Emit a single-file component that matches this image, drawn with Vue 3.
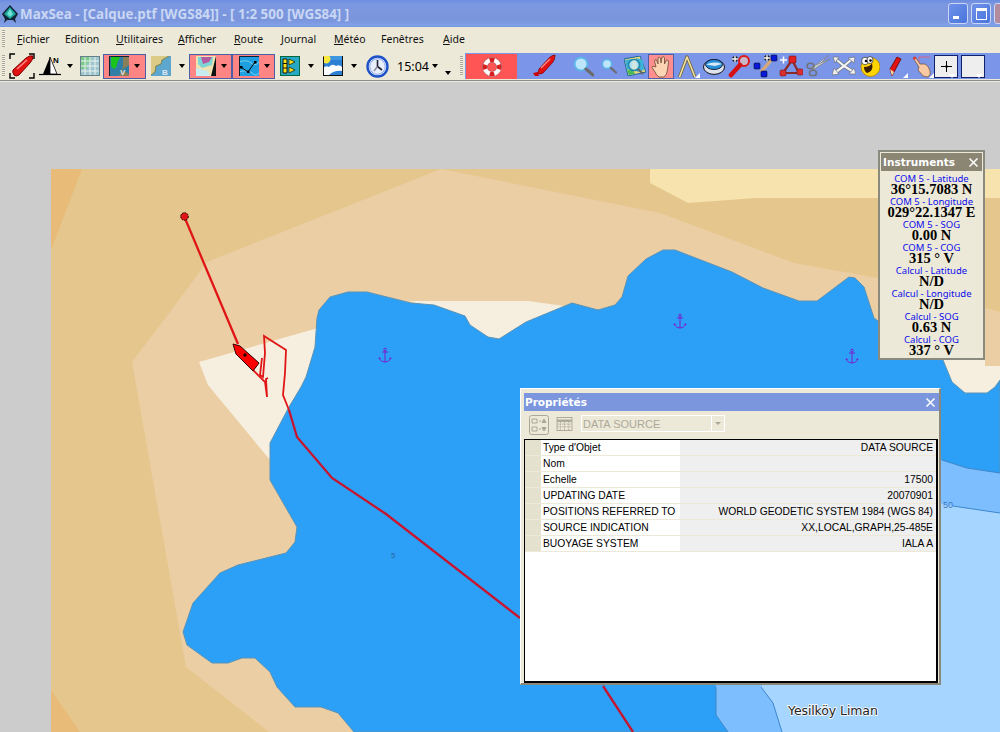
<script setup>
const menus = [
  { first: 'F', rest: 'ichier', u: true },
  { first: 'E', rest: 'dition', u: false },
  { first: 'U', rest: 'tilitaires', u: true },
  { first: 'A', rest: 'fficher', u: true },
  { first: 'R', rest: 'oute', u: true },
  { first: 'J', rest: 'ournal', u: true },
  { first: 'M', rest: 'étéo', u: true },
  { first: 'F', rest: 'enêtres', u: false },
  { first: 'A', rest: 'ide', u: true }
]
const instruments = [
  ['COM 5 - Latitude', '36°15.7083 N'],
  ['COM 5 - Longitude', '029°22.1347 E'],
  ['COM 5 - SOG', '0.00 N'],
  ['COM 5 - COG', '315 ° V'],
  ['Calcul - Latitude', 'N/D'],
  ['Calcul - Longitude', 'N/D'],
  ['Calcul - SOG', '0.63 N'],
  ['Calcul - COG', '337 ° V']
]
const props = [
  ["Type d'Objet", 'DATA SOURCE'],
  ['Nom', ''],
  ['Echelle', '17500'],
  ['UPDATING DATE', '20070901'],
  ['POSITIONS REFERRED TO', 'WORLD GEODETIC SYSTEM 1984 (WGS 84)'],
  ['SOURCE INDICATION', 'XX,LOCAL,GRAPH,25-485E'],
  ['BUOYAGE SYSTEM', 'IALA A']
]
const anchors = [[385, 355], [680, 321], [852, 356]]
const coast = '301,387 306,377 315,347 317,318 319,310 330,297 348,292 367,292 411,303 434,305 465,316 470,325 488,337 499,339 526,322 572,303 598,310 615,305 622,297 628,276 646,259 663,250 675,250 732,272 763,288 799,301 817,301 849,277 855,278 864,287 874,318 878,321 943,360 952,382 965,393 987,393 995,387 1000,380 1000,732 354,732 338,713 321,707 295,707 277,687 270,672 255,658 242,658 228,663 212,663 187,645 183,632 193,603 220,573 238,565 286,553 295,542 297,527 270,480 270,443 289,407'
</script>

<template>
  <div class="app">
    <header class="title">
      <svg class="logo" width="18" height="20" viewBox="0 0 18 20">
        <path d="M9 1 L17 10 L14 15 L15 19 L12 16 H6 L3 19 L4 15 L1 10Z" fill="#123" />
        <path d="M9 3 L15 10 L9 15 L3 10Z" fill="#1ea7a0" />
        <path d="M9 5 L12 10 L9 13 L6 10Z" fill="#6fe0d0" />
      </svg>
      <span class="title-text">MaxSea - [Calque.ptf [WGS84]] - [ 1:2 500 [WGS84] ]</span>
      <div class="win-btns">
        <span class="wb"><i class="wmin"></i></span>
        <span class="wb"><i class="wmax"></i></span>
        <span class="wb wclose"></span>
      </div>
    </header>

    <nav class="menu">
      <span class="grip"></span>
      <span v-for="m in menus" :key="m.rest" class="menu-item"><u v-if="m.u">{{ m.first }}</u><template v-else>{{ m.first }}</template>{{ m.rest }}</span>
    </nav>

    <div class="toolbar">
      <div class="tb-left">
        <span class="grip tgrip"></span>
        <span class="cell">
          <svg width="26" height="26" viewBox="0 0 26 26">
            <path d="M1 6V1H6M20 1H25V6M1 20V25H6M20 25H25V20" fill="none" stroke="#000" stroke-width="1.4" />
            <path d="M4 17 L17 5 Q21 2 24 3 Q24 7 21 10 L10 22 Q7 24 5 22 Q3 19 4 17Z" fill="#e31212" stroke="#7a0000" />
            <path d="M8 16 L18 7" stroke="#ff8a8a" stroke-width="1.5" />
          </svg>
        </span>
        <span class="cell">
          <svg width="24" height="20" viewBox="0 0 24 20">
            <path d="M1 18.5H23" stroke="#000" stroke-width="1.2" />
            <path d="M12 1 L5 18 H12Z" fill="#000" />
            <path d="M12 1 L19 18 H12Z" fill="#fff" stroke="#000" stroke-width=".8" />
            <text x="15" y="7" class="svgn">N</text>
          </svg>
        </span>
        <span class="drop"></span>
        <span class="cell">
          <svg width="20" height="20" viewBox="0 0 20 20">
            <rect width="20" height="20" fill="#9fc6cf" />
            <path d="M0 0H11V7H7V13H0Z" fill="#7cc98d" />
            <path d="M5 0V20M10 0V20M15 0V20M0 5H20M0 10H20M0 15H20" stroke="#e9f3ef" stroke-width="1" />
            <rect x=".5" y=".5" width="19" height="19" fill="none" stroke="#66808a" />
          </svg>
        </span>
        <span class="redbtn">
          <svg width="20" height="20" viewBox="0 0 20 20">
            <rect width="20" height="20" fill="#2e7ea6" />
            <path d="M14 0 H20 V9 L13 14 L20 18 V20 H10 L14 11Z" fill="#8a7f58" />
            <path d="M2 1 Q9 -1 11 1 Q8 6 7 12 Q3 14 2 9Z" fill="#19c41d" />
            <text x="11" y="18.5" class="svgv">V</text>
            <path d="M.5 20V.5H20" fill="none" stroke="#123" />
          </svg>
          <span class="drop"></span>
        </span>
        <span class="cell">
          <svg width="20" height="20" viewBox="0 0 20 20">
            <rect width="20" height="20" fill="#5da7cf" />
            <path d="M0 0H18 Q14 3 11 4 L10 8 L5 10 L4 16 L0 19Z" fill="#dccb86" />
            <path d="M0 19 L4 16 L5 10 L10 8 L11 4 L18 0" fill="none" stroke="#76824f" />
            <text x="11" y="18.5" class="svgv">B</text>
          </svg>
        </span>
        <span class="drop"></span>
        <span class="redbtn b2">
          <svg width="20" height="20" viewBox="0 0 20 20">
            <rect width="20" height="20" fill="#111" />
            <path d="M0 20V0H20L15 20Z" fill="#efe3b4" />
            <path d="M2 1H17L16 9 L6 12 L2 8Z" fill="#7fd5d5" />
            <path d="M5 1H16L13 6 L7 8Z" fill="#b45aa0" />
            <path d="M0 20 V12 L12 15 L14 20Z" fill="#c7ecf0" />
          </svg>
          <span class="drop"></span>
        </span>
        <span class="redbtn b3">
          <svg width="20" height="20" viewBox="0 0 20 20">
            <rect width="20" height="20" fill="#1f9fe0" />
            <path d="M0 6 Q8 3 12 7 T20 6M0 16 Q9 13 13 17 T20 17" stroke="#75d2f2" fill="none" />
            <path d="M2 11 L9 16 L16 6" stroke="#000" stroke-width="1" fill="none" />
            <rect x="1" y="10" width="2.500" height="2.500" fill="#000" /><rect x="8" y="14.500" width="2.500" height="2.500" fill="#000" /><rect x="15" y="5" width="2.500" height="2.500" fill="#000" />
            <path d="M.5 20V.5H20" fill="none" stroke="#123" />
          </svg>
          <span class="drop"></span>
        </span>
        <span class="cell">
          <svg width="20" height="20" viewBox="0 0 20 20">
            <rect x=".5" y=".5" width="19" height="19" fill="#27a9c4" stroke="#064" />
            <path d="M3 3H7V17H3Z" fill="#ffe21a" />
            <path d="M3 3H7V17H3ZM3 7.500H7M3 12H7" fill="none" stroke="#111" />
            <path d="M9 3L15 6 9 9ZM9 11L15 14 9 17Z" fill="#ffe21a" stroke="#111" stroke-width=".7" />
          </svg>
        </span>
        <span class="drop"></span>
        <span class="cell">
          <svg width="20" height="20" viewBox="0 0 20 20">
            <rect width="20" height="20" fill="#2d7fd3" />
            <path d="M0 4 H20 V0 H0Z" fill="#3d97e0" />
            <circle cx="3" cy="3" r="4.500" fill="#ffe83c" />
            <path d="M0 17 V12 Q3 9 6 11 Q9 7 13 10 Q17 8 20 12 V15 Q10 14 5 20 H0Z" fill="#fff" />
            <path d="M.5 20V.5" stroke="#111" /><path d="M19.500 0V20M0 19.500H20" stroke="#111" />
          </svg>
        </span>
        <span class="drop"></span>
        <span class="cell">
          <svg width="23" height="23" viewBox="0 0 23 23">
            <circle cx="11.500" cy="11.500" r="10" fill="#fff" stroke="#1e50c8" stroke-width="2.400" />
            <circle cx="11.500" cy="11.500" r="7.800" fill="#e8eefc" stroke="#7da0e8" stroke-width="1" />
            <path d="M11.500 5V11.500L16 15" fill="none" stroke="#223" stroke-width="1.600" />
            <path d="M11.500 11.500L8 16" stroke="#889" stroke-width="1.400" />
          </svg>
        </span>
        <span class="time">15:04</span>
        <span class="drop"></span>
        <span class="drop low"></span>
        <span class="grip tgrip2"></span>
        <span class="buoy">
          <svg width="20" height="20" viewBox="0 0 22 22">
            <circle cx="11" cy="11" r="10.400" fill="none" stroke="#8a6a6a" stroke-width=".8" />
            <circle cx="11" cy="11" r="5.200" fill="none" stroke="#8a6a6a" stroke-width=".8" />
            <circle cx="11" cy="11" r="7.800" fill="none" stroke="#fff" stroke-width="4.600" />
            <path d="M8.500 3.600A7.800 7.800 0 0 1 13.500 3.600M18.400 8.500A7.800 7.800 0 0 1 18.400 13.500M13.500 18.400A7.800 7.800 0 0 1 8.500 18.400M3.600 13.500A7.800 7.800 0 0 1 3.600 8.500" fill="none" stroke="#d81f1f" stroke-width="4.600" />
          </svg>
        </span>
      </div>
      <div class="tb-right">
        <span class="cell">
          <svg width="24" height="24" viewBox="0 0 24 24">
            <path d="M7 15 L17 4 Q20 1 23 1 Q23 5 21 8 L11 19 Q8 21 6 19Z" fill="#e31212" stroke="#8a0000" stroke-width=".8" />
            <path d="M9 14 L18 5" stroke="#ff9090" stroke-width="1.200" />
            <path d="M1 19 L6 18 L7 22 L3 22Z" fill="#c00" />
          </svg>
        </span>
        <span class="cell">
          <svg width="21" height="21" viewBox="0 0 21 21">
            <circle cx="8" cy="8" r="6.500" fill="#bde6fa" stroke="#5fb4ea" stroke-width="2" />
            <path d="M13 13 L20 19" stroke="#6b6b6b" stroke-width="3" stroke-linecap="round" />
          </svg>
        </span>
        <span class="cell">
          <svg width="16" height="16" viewBox="0 0 16 16">
            <circle cx="6" cy="6" r="4.600" fill="#bde6fa" stroke="#5fb4ea" stroke-width="1.600" />
            <path d="M10 10 L15 14.500" stroke="#6b6b6b" stroke-width="2.200" stroke-linecap="round" />
          </svg>
        </span>
        <span class="cell">
          <svg width="22" height="20" viewBox="0 0 22 20">
            <path d="M0 3L16 0L22 16L4 20Z" fill="#e9d87c" stroke="#1a6a9a" />
            <path d="M1 4L9 3L8 12L3 14ZM12 2L19 4L20 14L13 16Z" fill="#3db0d8" />
            <path d="M3 15L8 12L11 18L5 19Z" fill="#4bb858" />
            <circle cx="10" cy="9" r="5.500" fill="#cdebf8" fill-opacity=".8" stroke="#28a" stroke-width="1.600" />
            <path d="M14 13L19 18" stroke="#666" stroke-width="2.200" />
          </svg>
        </span>
        <span class="hand-btn">
          <svg width="20" height="23" viewBox="0 0 20 23">
            <path d="M5 12 L3.500 6 Q3.500 4 5.500 5 L7 9 L7 3 Q8 1 9.500 3 L10 8 L11 2 Q13 1 13.500 3 L13.500 9 L15.500 5 Q17.500 4.500 17.500 7 L16.500 15 Q16 20 13 22 L8 22 Q5 20 4 17 L1 12.500 Q1 10.500 3 11.500Z" fill="#fbd4b4" stroke="#7a5540" stroke-width=".9" />
          </svg>
        </span>
        <span class="cell tri-mark">
          <svg width="18" height="23" viewBox="0 0 18 23">
            <path d="M1.500 22 L9 2 L17 22" fill="none" stroke="#6d6238" stroke-width="3.200" stroke-linejoin="round" />
            <path d="M1.500 22 L9 2 L17 22" fill="none" stroke="#f2e2a0" stroke-width="1.600" stroke-linejoin="round" />
          </svg>
        </span>
        <span class="cell">
          <svg width="22" height="18" viewBox="0 0 22 18">
            <ellipse cx="11" cy="10" rx="10.500" ry="7.400" fill="#dfe4ec" stroke="#111" stroke-width="1" />
            <ellipse cx="11" cy="7.500" rx="8.500" ry="5" fill="#2a90d8" stroke="#124" />
            <path d="M3 7.500 Q11 4 19 7L12 9Z" fill="#d8eaf8" />
          </svg>
        </span>
        <span class="cell">
          <svg width="24" height="25" viewBox="0 0 24 25">
            <circle cx="16" cy="7" r="5" fill="#c8b8c8" stroke="#e01818" stroke-width="2" />
            <path d="M12 11 L3 21" stroke="#d41010" stroke-width="4.600" stroke-linecap="round" />
            <path d="M4 5H10M7 2V8" stroke="#000" stroke-width="3" /><path d="M4 5H10M7 2V8" stroke="#fff" stroke-width="1.400" />
          </svg>
        </span>
        <span class="cell">
          <svg width="25" height="24" viewBox="0 0 25 24">
            <path d="M8 18 L20 4" stroke="#d6a878" stroke-width="3.400" />
            <rect x="1" y="9" width="6" height="6" rx="1" fill="#0a18d8" stroke="#013" stroke-width=".6" />
            <rect x="8" y="17" width="6" height="6" rx="1" fill="#0a18d8" stroke="#013" stroke-width=".6" />
            <rect x="18" y="1" width="6" height="6" rx="1" fill="#0a18d8" stroke="#013" stroke-width=".6" />
            <path d="M11 4H17M14 1V7" stroke="#000" stroke-width="3" /><path d="M11 4H17M14 1V7" stroke="#fff" stroke-width="1.400" />
          </svg>
        </span>
        <span class="cell">
          <svg width="24" height="24" viewBox="0 0 24 24">
            <path d="M13 6 L4 19 H20Z" fill="none" stroke="#8a2a2a" stroke-width="2.200" />
            <rect x="10" y="2" width="7" height="7" rx="1" fill="#e02020" stroke="#7a1010" stroke-width=".6" />
            <rect x="1" y="16" width="6" height="6" rx="1.500" fill="#d83030" stroke="#7a1010" stroke-width=".6" />
            <rect x="18" y="15" width="6" height="6" rx="1.500" fill="#d83030" stroke="#7a1010" stroke-width=".6" />
            <path d="M1 6H8M4.500 2.500V9.500" stroke="#fff" stroke-width="1.500" />
          </svg>
        </span>
        <span class="cell">
          <svg width="24" height="22" viewBox="0 0 24 22">
            <path d="M23 0 L6 13 L8 15Z" fill="#eef0f4" stroke="#7c828c" stroke-width=".8" />
            <path d="M24 4 L7 15 L5 12Z" fill="#c9ced6" stroke="#7c828c" stroke-width=".8" />
            <ellipse cx="4.500" cy="11" rx="3.500" ry="2.800" fill="none" stroke="#6f747c" stroke-width="1.600" />
            <ellipse cx="7" cy="18" rx="3.500" ry="2.800" fill="none" stroke="#6f747c" stroke-width="1.600" />
          </svg>
        </span>
        <span class="cell">
          <svg width="24" height="20" viewBox="0 0 24 20">
            <path d="M12 10 L5 4M12 10 L19 4M12 10 L4 16M12 10 L20 15" stroke="#6c7078" stroke-width="3.600" />
            <path d="M12 10 L5 4M12 10 L19 4M12 10 L4 16M12 10 L20 15" stroke="#f4f4f4" stroke-width="2.200" />
            <path d="M1 1H7L3 7ZM23 1L22 7 16 2ZM0 19 L2 12 7 18ZM24 18 L17 18 22 12Z" fill="#eeeeee" stroke="#6c7078" stroke-width=".7" />
          </svg>
        </span>
        <span class="cell">
          <svg width="20" height="21" viewBox="0 0 20 21">
            <circle cx="10.500" cy="11" r="9.500" fill="#ffd400" stroke="#a87800" stroke-width=".7" />
            <path d="M4 11 Q10 11 12 7 Q14 15 7 17 Q4 15 4 11Z" fill="#3a2000" />
            <ellipse cx="5" cy="5" rx="3.400" ry="3.800" fill="#fff" stroke="#222" stroke-width=".7" />
            <ellipse cx="10" cy="4" rx="3" ry="3.500" fill="#fff" stroke="#222" stroke-width=".7" />
            <circle cx="6" cy="5" r="1.300" fill="#000" /><circle cx="10.500" cy="4.500" r="1.300" fill="#000" />
          </svg>
        </span>
        <span class="cell tri-mark">
          <svg width="13" height="21" viewBox="0 0 13 21">
            <path d="M3 20 L1 13 L8 1 L12 3 L5 16Z" fill="#e31212" stroke="#650000" stroke-width=".8" />
            <path d="M1 13 L3 20 L5 16Z" fill="#f3d7a8" />
          </svg>
        </span>
        <span class="cell tri-mark">
          <svg width="21" height="23" viewBox="0 0 21 23">
            <path d="M8 2H19M8 2V12" stroke="#f05a70" stroke-width=".8" />
            <path d="M2 3 Q4 1 5 3 L9 9 L14 9 Q18 11 19 16 Q20 21 16 22 L12 21 L7 15 L8 12Z" fill="#f9c9a4" stroke="#754" stroke-width=".8" />
            <path d="M2 3 L4 1.500 L5.500 3.500 L3 5Z" fill="#e33" />
          </svg>
        </span>
        <span class="box tri-mark dark"><svg width="11" height="11" viewBox="0 0 11 11"><path d="M5.500 0V11M0 5.500H11" stroke="#000" /><circle cx="5.500" cy="5.500" r="1.300" /></svg></span>
        <span class="box tri-mark dark"></span>
      </div>
    </div>
    <div class="shade"></div>

    <main class="stage">
      <svg class="map" width="949" height="563" viewBox="51 169 949 563">
        <rect x="51" y="169" width="949" height="563" fill="#e5c68c" />
        <path d="M51 169H82L51 250Z" fill="#e8bc78" />
        <path d="M51 690L80 732H51Z" fill="#e8bc78" />
        <path d="M441 169L300 225L207 262L170 312L132 362L186 667L269 732H360V400H1000V312L878 278L794 263L660 213Z" fill="#eccea4" />
        <path d="M650 169H1000V198H756L688 203L650 183Z" fill="#f7e3ae" />
        <path d="M199 362L318 328L315 347L306 377L301 387L289 407L270 443V460L208 385Z" fill="#f6efe0" />
        <path d="M409 301H528L564 306L572 310L526 330L499 345L470 330L434 308Z" fill="#f6efe0" />
        <path d="M940 360H1000V385L987 398H960L945 380Z" fill="#f6efe0" />
        <path d="M985 360H1000V366H985Z" fill="#eccea4" />
        <polygon :points="coast" fill="#2ca0f6" stroke="#5b93b6" stroke-width="1" />
        <path d="M1000 473L967 468L942 460L716 600V715L728 732H1000Z" fill="#7dbeff" />
        <path d="M1000 513L953 506L900 495L761 687L773 703L782 732H1000Z" fill="#a6d5ff" />
        <path d="M1000 473L967 468L942 460M716 687V715L728 732M1000 513L953 506M761 687L773 703L782 732" fill="none" stroke="#3f86c8" stroke-width="1" />
        <text x="943" y="508" class="sound fifty">50</text>
        <text x="391" y="558" class="sound">5</text>
        <text x="788" y="715" class="place">Yesilköy Liman</text>
        <g v-for="a in anchors" :key="a[0]" :transform="`translate(${a[0]} ${a[1]})`" fill="none" stroke="#7a1fd0" stroke-width="1">
          <circle cy="-5.500" r="1.300" />
          <path d="M0 -4V7M-3 -3H3M-5.500 3Q-5 6.500 0 7Q5 6.500 5.500 3M-6 4L-5.500 2.500L-4.500 4M6 4L5.500 2.500L4.500 4" />
        </g>
        <polyline points="184,216 238,344" fill="none" stroke="#e01616" stroke-width="2.300" />
        <polyline points="253,370 265,382 267,397 266,379 268,378" fill="none" stroke="#e01616" stroke-width="1.800" />
        <polyline points="262,358 260,375 263,377 265,353 264,336 286,350 285,373 283,395 289,410" fill="none" stroke="#e01616" stroke-width="1.800" />
        <polyline points="289,410 297,437 332,478 386,514 520,618" fill="none" stroke="#c8152f" stroke-width="2.300" />
        <polyline points="603,686 633,732" fill="none" stroke="#c8152f" stroke-width="2.300" />
        <path d="M233 344L240 346L259 363L253 371L236 354Z" fill="#f00" stroke="#300" stroke-width="1" />
        <circle cx="245" cy="355" r="1.700" fill="#200" />
        <circle cx="184.500" cy="216.500" r="3.800" fill="#e01616" stroke="#000" stroke-dasharray="1.500 1" />
      </svg>

      <section class="instr">
        <div class="instr-head"><span>Instruments</span><svg width="9" height="9" viewBox="0 0 9 9"><path d="M.5 .5L8.500 8.500M8.500 .5L.5 8.500" stroke="#fff" stroke-width="1.500" /></svg></div>
        <div class="instr-body">
          <div v-for="r in instruments" :key="r[0]" class="instr-row">
            <span class="ilabel">{{ r[0] }}</span>
            <span class="ivalue">{{ r[1] }}</span>
          </div>
        </div>
      </section>

      <section class="prop">
        <div class="prop-head"><span>Propriétés</span><svg width="9" height="9" viewBox="0 0 9 9"><path d="M.5 .5L8.500 8.500M8.500 .5L.5 8.500" stroke="#fff" stroke-width="1.500" /></svg></div>
        <div class="prop-tools">
          <svg width="20" height="20" viewBox="0 0 20 20">
            <rect x=".5" y=".5" width="19" height="19" rx="2" fill="none" stroke="#aca899" />
            <path d="M3 4H8V8H3ZM3 12H8V16H3Z" fill="none" stroke="#aca899" /><path d="M10 6H12M10 14H12M13 7.500L15 4L17 7.500ZM13 12.500L15 16L17 12.500Z" fill="#aca899" stroke="#aca899" />
          </svg>
          <svg class="tool2" width="17" height="14" viewBox="0 0 17 15">
            <rect x=".5" y=".5" width="16" height="14" fill="none" stroke="#aca899" />
            <path d="M.5 4H16.500" stroke="#aca899" stroke-width="2.500" /><path d="M1 7.500H16M1 10.500H16M4 5V15M8.500 5V15M13 5V15" stroke="#aca899" stroke-dasharray="1.500 1" />
          </svg>
          <div class="combo"><span class="combo-text">DATA SOURCE</span><span class="combo-btn"></span></div>
        </div>
        <div class="prop-list">
          <div v-for="p in props" :key="p[0]" class="prow">
            <span class="pgut"></span>
            <span class="pname">{{ p[0] }}</span>
            <span class="pval">{{ p[1] }}</span>
          </div>
        </div>
      </section>
    </main>
  </div>
</template>

<style scoped>
.app {
  position: relative;
  width: 1000px;
  height: 732px;
  overflow: hidden;
  background: #cccccc;
  display: flex;
  flex-direction: column;
  font-family: "Noto Sans", "Liberation Sans", sans-serif;
  color: #000;
}
.title {
  height: 27px;
  flex: none;
  display: flex;
  align-items: center;
  padding-left: 1px;
  background: linear-gradient(#6c8ce0 0, #7c98e0 4px, #7a95dc 20px, #80a2ea 26px, #6f8fd8 27px);
}
.logo { flex: none; margin-top: 1px; }
.title-text {
  margin-left: 1px;
  color: #c9d7f4;
  font: bold 13.400px "Open Sans", "DejaVu Sans", sans-serif;
  white-space: nowrap;
}
.win-btns { margin-left: auto; display: flex; gap: 3px; margin-right: -14px; margin-top: -1px; }
.wb {
  width: 18px;
  height: 19px;
  border: 1px solid #c9d6f6;
  border-radius: 3px;
  background: linear-gradient(135deg, #6f92ea, #4a74dc);
  position: relative;
  display: block;
}
.wclose { background: #b38b9e; }
.wmin { position: absolute; left: 4px; bottom: 4px; width: 6px; height: 3px; background: #fff; }
.wmax { position: absolute; left: 4px; top: 4px; width: 9px; height: 8px; border: 1px solid #fff; border-top-width: 3px; }

.menu {
  height: 26px;
  flex: none;
  box-sizing: border-box;
  padding-bottom: 3px;
  display: grid;
  grid-template-columns: 10px 48px 51px 62px 56px 47px 53px 47px 62px 60px;
  align-items: center;
  background: #ece9d8;
  font-size: 10.500px;
}
.menu-item { padding-left: 7px; white-space: nowrap; color: #111; }
.grip {
  display: block;
  width: 3px;
  height: 17px;
  margin-left: 2px;
  background: repeating-linear-gradient(#a8a594 0 1px, #f4f2e8 1px 2px);
}
.toolbar {
  height: 26px;
  flex: none;
  display: flex;
  background: #ece9d8;
}
.tb-left {
  width: 517px;
  flex: none;
  display: grid;
  grid-template-columns: 7px 30px 26px 13px 27px 43px 29px 13px 44px 43px 29px 14px 29px 13px 34px 36px 10px 15px 10px 52px;
  align-items: center;
}
.tb-right {
  flex: 1;
  display: grid;
  grid-template-columns: 53px 27px 24px 27px 26px 26px 27px 26px 25px 26px 27px 26px 26px 25px 26px 27px 26px;
  align-items: center;
  background: #7b96e8;
}
.cell { display: flex; align-items: center; justify-content: center; height: 26px; position: relative; }
.cell svg, .redbtn svg, .buoy svg, .hand-btn svg { display: block; }
.tgrip { margin-left: 2px; height: 22px; }
.tgrip2 { margin-left: 5px; height: 20px; }
.drop { position: relative; display: flex; justify-content: center; height: 26px; align-items: center; }
.drop::after {
  content: "";
  border-left: 3.500px solid transparent;
  border-right: 3.500px solid transparent;
  border-top: 4px solid #000;
}
.drop.low::after { margin-top: 13px; }
.redbtn {
  height: 25px;
  box-sizing: border-box;
  background: #ff8585;
  border: 1px solid #4a5fa8;
  display: flex;
  align-items: center;
  padding-left: 5px;
}
.redbtn .drop { width: 14px; margin-left: 1px; }
.redbtn.b2 { margin-left: 1px; padding-left: 6px; }
.redbtn.b3 { padding-left: 6px; }
.time { font-size: 12.500px; padding-left: 3px; }
.buoy {
  height: 26px;
  background: #ff5555;
  display: flex;
  align-items: center;
  justify-content: center;
  box-sizing: border-box;
  border-left: 1px solid #7b96e8;
  border-top: 1px solid #7b96e8;
}
.hand-btn {
  height: 25px;
  box-sizing: border-box;
  background: #ff8f8f;
  border: 1px solid #4a5fa8;
  display: flex;
  align-items: center;
  justify-content: center;
}
.tri-mark { position: relative; }
.tri-mark::after {
  content: "";
  position: absolute;
  right: 0;
  bottom: 1px;
  border-left: 5px solid transparent;
  border-bottom: 5px solid #fff;
}
.box {
  width: 24px;
  height: 23px;
  box-sizing: border-box;
  background: #eeeeee;
  border: 1px solid #10206a;
  display: flex;
  align-items: center;
  justify-content: center;
}
.box.dark::after {
  right: 1px;
  bottom: -1px;
  border-left: 4px solid transparent;
  border-right: 4px solid transparent;
  border-top: 4px solid #fff;
  border-bottom: 0;
}
.shade {
  height: 3px;
  flex: none;
  background: linear-gradient(#ece9d8 0 1px, #8c8c84 1px 2px, #e8e8e8 2px);
}
.stage {
  flex: 1;
  padding: 87px 0 0 51px;
  min-height: 0;
}
.map { display: block; }
.sound { font: 8px "Liberation Sans", sans-serif; fill: #2b62a0; }
.fifty { font-size: 9px; fill: #3a78c0; }
.place {
  font: 12.500px "DejaVu Sans", sans-serif;
  letter-spacing: -.1px;
  fill: #222;
  paint-order: stroke;
  stroke: #fff;
  stroke-width: 1.500px;
}
.svgn { font: bold 8px "Liberation Sans", sans-serif; fill: #000; }
.svgv { font: bold 8px "Liberation Sans", sans-serif; fill: #dfe9f5; }

.instr {
  position: absolute;
  left: 878px;
  top: 150px;
  width: 107px;
  height: 210px;
  box-sizing: border-box;
  background: #ece9d8;
  border: 2px solid #8b8a7e;
}
.instr-head {
  margin: 1px;
  height: 18px;
  background: #8b8673;
  color: #fff;
  font: bold 10.500px "DejaVu Sans", sans-serif;
  display: flex;
  align-items: center;
  justify-content: space-between;
  padding: 0 4px 0 2px;
}
.instr-body { display: flex; flex-direction: column; align-items: center; margin-top: 3px; }
.instr-row { height: 23px; display: flex; flex-direction: column; align-items: center; }
.ilabel { display: block; font-size: 9.500px; line-height: 9px; color: #0c0cec; white-space: nowrap; }
.ivalue { display: block; font: bold 14.500px/12px "Liberation Serif", serif; color: #000; white-space: nowrap; }

.prop {
  position: absolute;
  left: 520px;
  top: 388px;
  width: 421px;
  height: 297px;
  box-sizing: border-box;
  background: #ece9d8;
  border: 1px solid #fff;
  border-right: 2px solid #8a887a;
  border-bottom: 2px solid #8a887a;
  padding: 4px 0 0 3px;
  display: flex;
  flex-direction: column;
}
.prop-head {
  height: 18px;
  flex: none;
  background: #7b96dc;
  color: #fff;
  font: bold 10.500px "DejaVu Sans", sans-serif;
  display: flex;
  align-items: center;
  justify-content: space-between;
  padding: 0 4px 0 1px;
}
.prop-tools {
  height: 28px;
  box-sizing: border-box;
  flex: none;
  display: flex;
  align-items: flex-start;
  padding: 4px 0 0 5px;
}
.tool2 { margin: 2px 0 0 7px; }
.combo {
  margin-left: 8px;
  width: 144px;
  height: 17px;
  box-sizing: border-box;
  border: 1px solid #fff;
  display: flex;
  align-items: center;
  justify-content: space-between;
}
.combo-text { padding-left: 1px; font: 11px "Liberation Sans", sans-serif; color: #aca899; }
.combo-btn {
  width: 12px;
  height: 15px;
  border-left: 1px solid #fff;
  position: relative;
}
.combo-btn::after {
  content: "";
  position: absolute;
  left: 3px;
  top: 6px;
  border-left: 3px solid transparent;
  border-right: 3px solid transparent;
  border-top: 3px solid #aca899;
}
.prop-list {
  flex: 1;
  margin-right: 1px;
  background: #fff;
  border: 2px solid #000;
  border-width: 1px 2px 2px 1px;
  font: 10.300px "Liberation Sans", sans-serif;
}
.prow {
  height: 16px;
  box-sizing: border-box;
  display: grid;
  grid-template-columns: 16px 139px 1fr;
  grid-template-rows: 15px;
  border-bottom: 1px solid #ece9d8;
}
.pgut { background: #e4e1cf; }
.pname, .pval {
  box-sizing: border-box;
  height: 15px;
  padding-top: 1px;
  line-height: 14px;
  white-space: nowrap;
}
.pname { padding-left: 2px; background: #fff; }
.pval { text-align: right; padding-right: 3px; background: #efefef; }
</style>
